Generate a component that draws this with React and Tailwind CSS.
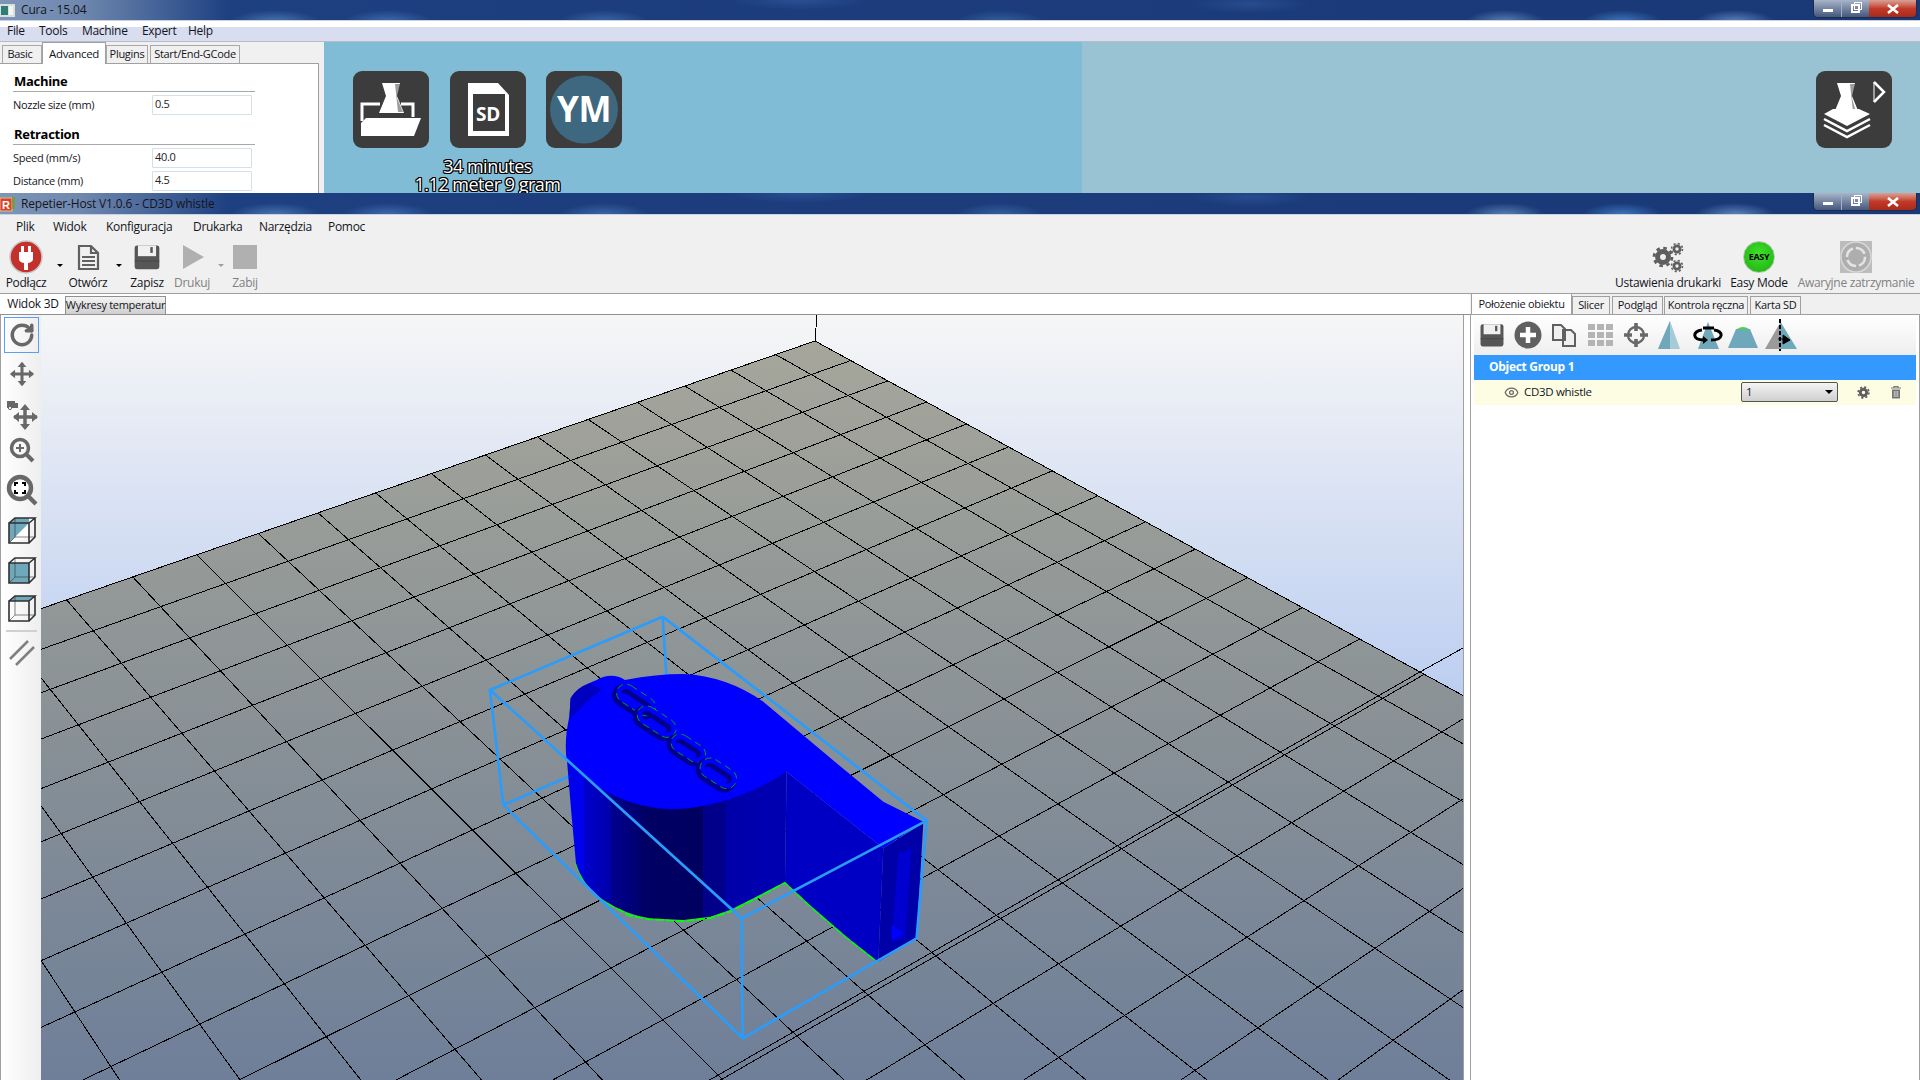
import { RotateCw, Eye } from "lucide-react";

const aero =
  "bg-[radial-gradient(ellipse_45px_12px_at_275px_22px,#4a76b0,transparent),radial-gradient(ellipse_45px_12px_at_388px_22px,#3f6cae,transparent),radial-gradient(ellipse_45px_12px_at_604px_22px,#3c68a8,transparent),radial-gradient(ellipse_70px_10px_at_800px_0px,#2a4f92,transparent),radial-gradient(ellipse_45px_12px_at_1000px_22px,#35609f,transparent),radial-gradient(ellipse_60px_10px_at_1250px_4px,#284c8e,transparent),radial-gradient(ellipse_40px_12px_at_1505px_22px,#5a83b5,transparent),radial-gradient(ellipse_40px_12px_at_1622px_22px,#3f78c0,transparent),radial-gradient(ellipse_40px_12px_at_1735px_22px,#5f86bf,transparent),linear-gradient(90deg,#7d95b8_0px,#7088ae_80px,#3d5d94_170px,#1e3f80_230px,#193876_100%)]";

function WindowControls() {
  return (
    <div className="ml-auto mr-[3px] flex h-[18px] self-start overflow-hidden rounded-b-[5px] border border-t-0 border-[#1c2c4c] text-white">
      <div className="flex w-[28px] items-center justify-center border-r border-[#a0b0c8] bg-gradient-to-b from-[#a8b4c8] to-[#46587c]">
        <div className="mt-[3px] h-[3px] w-[10px] bg-white" />
      </div>
      <div className="flex w-[27px] items-center justify-center bg-gradient-to-b from-[#a8b4c8] to-[#46587c]">
        <div className="relative h-[9px] w-[9px] border-2 border-white">
          <div className="absolute -right-[4px] -top-[4px] h-[8px] w-[8px] border border-white" />
        </div>
      </div>
      <div className="flex w-[47px] items-center justify-center bg-gradient-to-b from-[#d8a098] via-[#c23a28] to-[#a82a1c]">
        <svg width="12" height="10" viewBox="0 0 12 10">
          <path d="M1 1 L11 9 M11 1 L1 9" stroke="#fff" strokeWidth="2.6" />
        </svg>
      </div>
    </div>
  );
}

function TitleBar({ icon, title, height }) {
  return (
    <div className={`flex ${height} items-center border-b border-[#c8d2e4] ${aero}`}>
      <div className="flex w-[21px] justify-start">{icon}</div>
      <span className="text-[12px] tracking-[-0.15px] text-[#14141c]">{title}</span>
      <WindowControls />
    </div>
  );
}

function CuraIcon() {
  return (
    <svg width="15" height="13" viewBox="0 0 15 13">
      <rect x="0" y="0" width="15" height="13" fill="#d8e0d8" />
      <rect x="1" y="2" width="7" height="9" fill="#2e7d78" />
      <rect x="9" y="2" width="4" height="9" fill="#f4f4f4" />
    </svg>
  );
}

function RepIcon() {
  return (
    <svg width="16" height="16" viewBox="0 0 16 16">
      <rect x="0" y="2" width="12" height="13" fill="#d9442a" stroke="#e0c080" />
      <text x="2" y="13" fontSize="11" fontWeight="700" fill="#fff" fontFamily="Liberation Sans, sans-serif">R</text>
      <rect x="12" y="1" width="3" height="12" fill="#7a9a50" />
    </svg>
  );
}

function Flask({ x = 0, y = 0 }) {
  return (
    <path
      transform={`translate(${x} ${y})`}
      d="M0 0 H18 L15 13 L22 30 H-3 L4 13 Z"
      fill="#fff"
    />
  );
}

function LoadLogo() {
  return (
    <svg width="76" height="77" viewBox="0 0 76 77">
      <path d="M9 50 V33 H27 M48 33 H60 V46" fill="none" stroke="#fff" strokeWidth="3" />
      <Flask x={29} y={12} />
      <path d="M42 13 L47 13 L44 27 L50 41 L45 41 Z" fill="#3c3c3c" opacity="0.5" />
      <path d="M8 65 V52 L13 47 H68 L61 65 Z" fill="#fff" />
    </svg>
  );
}

function SdLogo() {
  return (
    <svg width="76" height="77" viewBox="0 0 76 77">
      <path d="M18 12 H48 L59 24 V65 H18 Z" fill="#fff" />
      <path d="M23 23 H55 V60 H23 Z" fill="#3c3c3c" />
      <text x="26" y="50" fontSize="19" fontWeight="700" fill="#fff" fontFamily="Open Sans, sans-serif">SD</text>
    </svg>
  );
}

function YmLogo() {
  return (
    <svg width="76" height="77" viewBox="0 0 76 77">
      <circle cx="38" cy="38.5" r="34" fill="#3d6880" />
      <text x="38" y="51" textAnchor="middle" fontSize="35" fontWeight="700" fill="#fff" fontFamily="Open Sans, sans-serif">YM</text>
    </svg>
  );
}

function LayerLogo() {
  return (
    <svg width="76" height="77" viewBox="0 0 76 77">
      <Flask x={21} y={12} />
      <path d="M34 13 L39 13 L36 27 L40 41 L37 41 Z" fill="#3c3c3c" opacity="0.5" />
      <path d="M8 43 L17 38 H43 L54 43 L31 55 Z" fill="#fff" />
      <path d="M8 48 L31 60 L54 48 M8 54 L31 66 L54 54" fill="none" stroke="#fff" strokeWidth="2.5" />
      <path d="M58 11 L68 21 L58 31" fill="none" stroke="#fff" strokeWidth="2.5" />
      <path d="M58 11 L58 31" fill="none" stroke="#fff" strokeWidth="1" />
    </svg>
  );
}

function LogoButton({ children }) {
  return <div className="h-[77px] w-[76px] rounded-[9px] bg-[#3c3c3c]">{children}</div>;
}

function CuraRow({ label, value }) {
  return (
    <div className="flex h-[20px] items-center">
      <span className="w-[139px] text-[11px] text-[#14141c]">{label}</span>
      <div className="flex h-[20px] w-[100px] items-center rounded-[1px] border border-[#d4e0e8] bg-white pb-[2px] pl-[2px] text-[11px] text-[#222]">
        {value}
      </div>
    </div>
  );
}

function CuraWindow() {
  return (
    <div className="h-[193px] overflow-hidden bg-[#f0f0f0]">
      <TitleBar icon={<CuraIcon />} title="Cura - 15.04" height="h-[21px]" />
      <div className="flex h-[21px] items-center border-b border-[#b8bcc8] bg-gradient-to-b from-white from-30% to-[#d8def0] to-30% pl-[7px] text-[12px] text-[#14141c]">
        <span className="w-[32px]">File</span>
        <span className="w-[43px]">Tools</span>
        <span className="w-[60px]">Machine</span>
        <span className="w-[46px]">Expert</span>
        <span>Help</span>
      </div>
      <div className="flex h-[151px]">
        <div className="w-[324px]">
          <div className="flex h-[21px] items-start text-[11px] text-[#14141c]">
            <div className="ml-[2px] mt-[3px] flex h-[18px] w-[40px] items-center justify-center border border-b-0 border-[#a8a8a8] bg-[#f0f0f0] pr-[4px]">Basic</div>
            <div className="relative z-10 flex h-[22px] w-[64px] items-center justify-center border border-b-0 border-[#a0a0a0] bg-white text-[11.5px]">Advanced</div>
            <div className="mt-[3px] flex h-[18px] w-[42px] items-center justify-center border border-b-0 border-[#a8a8a8] bg-[#f0f0f0]">Plugins</div>
            <div className="ml-[2px] mt-[3px] flex h-[18px] w-[90px] items-center justify-center border border-b-0 border-[#a8a8a8] bg-[#f0f0f0]">Start/End-GCode</div>
          </div>
          <div className="h-[130px] w-[319px] border-r border-t border-[#a0a0a0] bg-white pl-[13px] pt-[9px]">
            <div className="h-[19px] w-[242px] border-b border-[#a8a8a8] pl-[1px] text-[13px] leading-[17px] font-bold text-black">Machine</div>
            <div className="mt-[3px]">
              <CuraRow label="Nozzle size (mm)" value="0.5" />
            </div>
            <div className="mt-[11px] h-[19px] w-[242px] border-b border-[#a8a8a8] pl-[1px] text-[13px] leading-[17px] font-bold text-black">Retraction</div>
            <div className="mt-[3px]">
              <CuraRow label="Speed (mm/s)" value="40.0" />
            </div>
            <div className="mt-[3px]">
              <CuraRow label="Distance (mm)" value="4.5" />
            </div>
          </div>
        </div>
        <div className="w-[758px] bg-[#80bcd6] pl-[29px] pt-[29px]">
          <div className="flex w-[269px] justify-between">
            <LogoButton><LoadLogo /></LogoButton>
            <LogoButton><SdLogo /></LogoButton>
            <LogoButton><YmLogo /></LogoButton>
          </div>
          <div className="mt-[9px] w-[269px] text-center text-[18px] leading-[18px] tracking-[-0.5px] text-white [text-shadow:1px_0_0_#000,-1px_0_0_#000,0_1px_0_#000,0_-1px_0_#000,1px_1px_0_#000,-1px_-1px_0_#000,1px_-1px_0_#000,-1px_1px_0_#000]">
            <div>34 minutes</div>
            <div>1.12 meter 9 gram</div>
          </div>
        </div>
        <div className="flex flex-1 justify-end bg-[#99c2d3] pr-[28px] pt-[29px]">
          <LogoButton><LayerLogo /></LogoButton>
        </div>
      </div>
    </div>
  );
}

function PlugIcon() {
  return (
    <svg width="34" height="34" viewBox="0 0 34 34">
      <circle cx="17" cy="17" r="16" fill="#c4312c" stroke="#c8c8c8" strokeWidth="1.5" />
      <path d="M12 6 H15 V12 H19 V6 H22 V12 H24 V19 Q24 22 19 23 V30 H15 V23 Q10 22 10 19 V12 H12 Z" fill="#fff" />
    </svg>
  );
}

function FileIcon() {
  return (
    <svg width="34" height="34" viewBox="0 0 34 34">
      <path d="M8 6 H20 L27 13 V29 H8 Z M20 6 V13 H27" fill="none" stroke="#606060" strokeWidth="2.2" />
      <path d="M11 17 H24 M11 21 H24 M11 25 H24" stroke="#606060" strokeWidth="1.8" />
    </svg>
  );
}

function DiskIcon({ size = 26 }) {
  return (
    <svg width={size} height={size} viewBox="0 0 34 34">
      <path d="M5 3 H29 Q32 3 32 6 V28 Q32 32 29 32 H5 Q2 32 2 28 V6 Q2 3 5 3 Z" fill="#565656" />
      <rect x="6" y="3" width="22" height="13" fill="#f0f0f0" />
      <rect x="21" y="5" width="3" height="7" fill="#565656" />
      <path d="M2 22 H32" stroke="#444" />
    </svg>
  );
}

function PlayIcon() {
  return (
    <svg width="34" height="34" viewBox="0 0 34 34">
      <path d="M8 5 L29 17 L8 29 Z" fill="#b0b0b0" />
    </svg>
  );
}

function StopIcon() {
  return (
    <svg width="34" height="34" viewBox="0 0 34 34">
      <rect x="5" y="5" width="24" height="24" fill="#b0b0b0" />
    </svg>
  );
}

function Caret({ gray }) {
  return (
    <div className={`mt-[26px] h-0 w-0 border-x-[3.5px] border-t-[3.5px] border-x-transparent ${gray ? "border-t-[#a0a0a0]" : "border-t-black"}`} />
  );
}

function ToolItem({ width, label, gray, children }) {
  return (
    <div className={`flex ${width} flex-col items-center`}>
      <div className="flex h-[38px] items-center justify-center">{children}</div>
      <span className={`-mt-[2px] whitespace-nowrap text-[12px] leading-[17px] ${gray ? "text-[#808080]" : "text-[#14141c]"}`}>{label}</span>
    </div>
  );
}

function Gear({ cx, cy, r }) {
  const c = 2 * Math.PI * (r + 1);
  return (
    <g fill="none" stroke="#5e5e5e">
      <circle cx={cx} cy={cy} r={r * 0.68} strokeWidth={r * 0.62} />
      <circle cx={cx} cy={cy} r={r + 1} strokeWidth={r * 0.34} strokeDasharray={`${c / 16} ${c / 16}`} />
    </g>
  );
}

function GearsIcon() {
  return (
    <svg width="34" height="34" viewBox="0 0 34 34">
      <Gear cx={12} cy={17} r={8} />
      <Gear cx={26} cy={9} r={4.5} />
      <Gear cx={26} cy={26} r={4.5} />
    </svg>
  );
}

function EasyIcon() {
  return (
    <div className="flex h-[32px] w-[32px] items-center justify-center rounded-full border border-[#b8c8b8] bg-[radial-gradient(circle_at_50%_40%,#3fe02a,#1cae10)] text-[9px] font-bold text-black">
      EASY
    </div>
  );
}

function StopAllIcon() {
  return (
    <svg width="34" height="34" viewBox="0 0 34 34">
      <rect x="1" y="1" width="32" height="32" fill="#bcbcbc" />
      <circle cx="17" cy="17" r="15" fill="#aeaeae" stroke="#d8d8d8" strokeWidth="1.5" />
      <circle cx="17" cy="17" r="9" fill="none" stroke="#e4e4e4" strokeWidth="2.5" strokeDasharray="11 3" />
    </svg>
  );
}

function Cross({ size = 30 }) {
  return (
    <svg width={size} height={size} viewBox="0 0 30 30">
      <path d="M15 3 V27 M3 15 H27" stroke="#686868" strokeWidth="3.5" />
      <path d="M15 1 L20 7 H10 Z M15 29 L20 23 H10 Z M1 15 L7 10 V20 Z M29 15 L23 10 V20 Z" fill="#686868" />
    </svg>
  );
}

function TruckMove() {
  return (
    <svg width="32" height="32" viewBox="0 0 32 32">
      <path d="M19 8 V30 M8 19 H31" stroke="#686868" strokeWidth="3.5" />
      <path d="M19 6 L24 12 H14 Z M19 32 L24 26 H14 Z M7 19 L13 14 V24 Z M32 19 L26 14 V24 Z" fill="#686868" />
      <path d="M1 3 H9 V10 H1 Z M9 5 H12 V10 H9 Z" fill="#686868" />
      <circle cx="4" cy="10" r="1.6" fill="#fff" stroke="#686868" />
    </svg>
  );
}

function ZoomIcon() {
  return (
    <svg width="26" height="26" viewBox="0 0 26 26">
      <circle cx="11" cy="11" r="8.5" fill="none" stroke="#686868" strokeWidth="3.5" />
      <path d="M17 17 L24 24" stroke="#686868" strokeWidth="4" />
      <path d="M7 11 H15 M11 7 V15" stroke="#686868" strokeWidth="2" />
    </svg>
  );
}

function ZoomFitIcon() {
  return (
    <svg width="32" height="32" viewBox="0 0 32 32">
      <circle cx="14" cy="14" r="11" fill="#fff" stroke="#686868" strokeWidth="4.5" />
      <path d="M22 22 L30 30" stroke="#686868" strokeWidth="4.5" />
      <path d="M9 12 V9 H12 M16 9 H19 V12 M19 16 V19 H16 M12 19 H9 V16" fill="none" stroke="#000" strokeWidth="2" />
    </svg>
  );
}

function CubeIcon({ face }) {
  return (
    <svg width="30" height="30" viewBox="0 0 30 30">
      {face === "iso" && <path d="M8 3 H28 L22 8 V22 L2 28 V8 Z" fill="#fff" />}
      {face === "iso" && <path d="M2 8 L8 3 H22 V8 Z M2 8 H22 L2 28 Z" fill="#6fa8bb" />}
      {face === "front" && <rect x="2" y="8" width="20" height="20" fill="#6fa8bb" />}
      {face === "top" && <path d="M2 8 L8 3 H28 L22 8 Z" fill="#6fa8bb" />}
      <path d="M2 8 H22 V28 H2 Z M2 8 L8 3 H28 L22 8 M28 3 V22 L22 28" fill="none" stroke="#303030" strokeWidth="1.6" />
      <path d="M8 3 V22 H28 M8 22 L2 28" fill="none" stroke="#303030" strokeWidth="0.6" />
    </svg>
  );
}

function ParallelIcon() {
  return (
    <svg width="28" height="28" viewBox="0 0 28 28">
      <path d="M2 20 L20 2 M8 26 L26 8" stroke="#808080" strokeWidth="2.5" />
    </svg>
  );
}

const sideTools = [
  { slot: "h-[38px] pt-[2px]", selected: true, icon: <RotateCw size={26} strokeWidth={3.2} color="#686868" /> },
  { slot: "h-[42px]", icon: <Cross size={26} /> },
  { slot: "h-[38px]", icon: <TruckMove /> },
  { slot: "h-[34px]", icon: <ZoomIcon /> },
  { slot: "h-[46px]", icon: <ZoomFitIcon /> },
  { slot: "h-[34px]", icon: <CubeIcon face="iso" /> },
  { slot: "h-[46px]", icon: <CubeIcon face="front" /> },
  { slot: "h-[30px]", icon: <CubeIcon face="top" /> },
];

function SideToolbar() {
  return (
    <div className="flex h-full w-[41px] flex-col items-center border-l border-[#a0a0a0] bg-gradient-to-r from-white to-[#eeeeee] pl-[1px]">
      {sideTools.map((t, i) => (
        <div key={i} className={`flex w-full items-center justify-center ${t.slot}`}>
          {t.selected ? (
            <div className="flex h-[36px] w-[35px] items-center justify-center border border-[#5a9ff0]">{t.icon}</div>
          ) : (
            t.icon
          )}
        </div>
      ))}
      <div className="my-[7px] h-[2px] w-[31px] bg-[#d0d0d0]" />
      <div className="flex h-[28px] items-center justify-center">
        <ParallelIcon />
      </div>
    </div>
  );
}

// perspective of the printer bed, fitted to the grid crossings
const P = (u, v) => {
  const d = 1 - 0.01449 * u - 0.019 * v;
  return [815 + (-43 * u + 35.04 * v) / d, 341 + (14.87 * u + 19.17 * v) / d];
};
const UMAX = 18.9;
const VMAX = 20;
const ticks = Array.from({ length: 19 }, (_, i) => i + 1);
const bedCorners = [P(0, 0), P(UMAX, 0), P(UMAX, VMAX), P(0, VMAX)].map((p) => p.join(",")).join(" ");

function Seg({ a, b, ...rest }) {
  return <line x1={a[0]} y1={a[1]} x2={b[0]} y2={b[1]} {...rest} />;
}

function Letter({ x, y, w, h, rot, rx = 24 }) {
  return (
    <g transform={`rotate(${rot} ${x} ${y})`}>
      <rect x={x - w / 2 - 3} y={y - h / 2 + 9} width={w} height={h} rx={rx} fill="none" stroke="#00008c" strokeWidth="26" />
      <rect x={x - w / 2} y={y - h / 2} width={w} height={h} rx={rx} fill="none" stroke="#0000ff" strokeWidth="14" />
      <rect x={x - w / 2 - 7} y={y - h / 2 - 7} width={w + 14} height={h + 14} rx={rx + 6} fill="none" stroke="#00b000" strokeWidth="2.4" strokeDasharray="20 14" />
    </g>
  );
}

function Whistle() {
  const blue = "#2a9cfb";
  return (
    <g transform="translate(470 600) scale(0.3333)">
      {/* hidden part of the selection box */}
      <path d="M578 50 L590 240 M100 615 L300 528" stroke={blue} strokeWidth="8" fill="none" />
      <path
        d="M318 790 L345 852 L400 902 L480 947 L540 957 L640 963 L720 954 L780 934 L850 899 L945 847 L1020 917 L1130 1012 L1225 1087"
        fill="none"
        stroke="#00ff00"
        strokeWidth="7"
        strokeDasharray="26 5"
      />
      <path
        d="M290 470 L305 650 L318 790 Q340 860 400 900 Q470 945 540 955 L640 960 L720 950 L780 930 L850 895 L945 845 L950 515 Z"
        fill="url(#whistleSide)"
      />
      <path d="M950 515 L1240 745 L1225 1085 L1130 1010 L1020 915 L945 845 Z" fill="#0000c4" />
      <path d="M1240 745 L1360 668 L1340 1015 L1225 1085 Z" fill="#0000a8" />
      <path d="M1285 760 L1325 745 L1305 1018 L1265 1025 Z" fill="#0000d0" />
      <path d="M1265 975 L1302 1000 L1265 1022 Z" fill="#0000ff" />
      <path
        d="M290 480 Q282 420 298 350 L302 295 Q320 262 380 240 Q425 215 465 240 Q560 222 640 222 Q770 228 880 305 L1100 490 L1240 605 L1360 665 L1240 745 L950 515 Q780 625 600 628 Q420 620 290 480 Z"
        fill="#0000ff"
      />
      <path d="M302 295 Q320 262 360 250 L395 270 Q340 310 298 360 Z" fill="#0000c0" />
      <Letter x={498} y={300} w={115} h={42} rot={33} />
      <Letter x={560} y={365} w={115} h={42} rot={33} />
      <Letter x={655} y={445} w={100} h={40} rot={33} />
      <Letter x={745} y={520} w={105} h={46} rot={33} />
      {/* selection box */}
      <path
        d="M578 50 L60 270 L815 955 L1370 662 L578 50 M60 270 L100 615 L818 1315 L1340 1015 L1370 662 M815 955 L818 1315"
        fill="none"
        stroke={blue}
        strokeWidth="8"
      />
    </g>
  );
}

function Scene() {
  return (
    <svg width="1422" height="765" viewBox="41 315 1422 765" className="block">
      <defs>
        <linearGradient id="sky" x1="0" y1="315" x2="0" y2="720" gradientUnits="userSpaceOnUse">
          <stop offset="0" stopColor="#f6f6f6" />
          <stop offset="1" stopColor="#b8cbf0" />
        </linearGradient>
        <linearGradient id="bed" x1="0" y1="341" x2="0" y2="1080" gradientUnits="userSpaceOnUse">
          <stop offset="0" stopColor="#a6a69b" />
          <stop offset="0.5" stopColor="#8a9296" />
          <stop offset="1" stopColor="#6f7f99" />
        </linearGradient>
        <linearGradient id="whistleSide" x1="290" y1="0" x2="950" y2="0" gradientUnits="userSpaceOnUse">
          <stop offset="0" stopColor="#0000ee" />
          <stop offset="0.08" stopColor="#0000ee" />
          <stop offset="0.08" stopColor="#0000cc" />
          <stop offset="0.2" stopColor="#0000aa" />
          <stop offset="0.2" stopColor="#000090" />
          <stop offset="0.3" stopColor="#000078" />
          <stop offset="0.36" stopColor="#000064" />
          <stop offset="0.62" stopColor="#000060" />
          <stop offset="0.62" stopColor="#00008a" />
          <stop offset="0.72" stopColor="#00008a" />
          <stop offset="0.72" stopColor="#0000a8" />
          <stop offset="1" stopColor="#0000b4" />
        </linearGradient>
      </defs>
      <rect x="41" y="315" width="1422" height="765" fill="url(#sky)" />
      <polygon points={bedCorners} fill="url(#bed)" />
      <g stroke="#000" strokeWidth="1" shapeRendering="crispEdges">
        <line x1="816.5" y1="315" x2="815.5" y2="341" />
        <Seg a={P(0, 0)} b={P(UMAX, 0)} />
        <Seg a={P(0, 0)} b={P(0, VMAX)} />
        {ticks.map((k) => (
          <Seg key={`u${k}`} a={P(k - 0.1, 0)} b={P(k - 0.1, VMAX)} />
        ))}
        {ticks.map((k) => (
          <Seg key={`v${k}`} a={P(0, k)} b={P(UMAX, k)} />
        ))}
        <Seg a={P(0, 13.07)} b={P(UMAX, 13.07)} />
        <line x1="1420" y1="672" x2="1463" y2="648" />
      </g>
      <Whistle />
    </svg>
  );
}

function TrayTriangle() {
  return (
    <svg width="24" height="32" viewBox="0 0 24 32">
      <path d="M13 2 L23 30 H1 Z" fill="#a6cbd8" />
      <path d="M13 2 L13 30 H1 Z" fill="#6fa8bb" />
    </svg>
  );
}

function RotateTri() {
  return (
    <svg width="32" height="32" viewBox="0 0 32 32">
      <path d="M16 3 L27 30 H6 Z" fill="#6fa8bb" />
      <path d="M10 11 C0 12 0 21 12 21 M22 11 C32 12 32 21 19 21" fill="none" stroke="#000" strokeWidth="3" />
      <path d="M11 9 L22 9" stroke="#000" strokeWidth="3" />
      <path d="M11 17 L16 21 L11 25 Z" fill="#000" />
    </svg>
  );
}

function ScaleTri() {
  return (
    <svg width="32" height="32" viewBox="0 0 32 32">
      <path d="M9 10 H23 L31 29 H1 Z" fill="#6fa8bb" />
      <path d="M10 10 Q16 6 22 10 Z" fill="#3fe02a" />
    </svg>
  );
}

function MirrorTri() {
  return (
    <svg width="34" height="32" viewBox="0 0 34 32">
      <path d="M16 4 L16 30 H1 Z" fill="#9a9a9a" />
      <path d="M16 2 L33 30 H16 Z" fill="#6fa8bb" />
      <path d="M16 0 V32" stroke="#000" strokeWidth="2" strokeDasharray="4 2" />
      <path d="M14 20 H20 M19 16 L26 21 L19 25 Z" fill="#000" stroke="#000" />
    </svg>
  );
}

function CopyIcon() {
  return (
    <svg width="26" height="26" viewBox="0 0 26 26">
      <path d="M2 3 H10 L14 7 V18 H2 Z M12 8 H20 L24 12 V24 H12 Z" fill="#f0f0f0" stroke="#606060" strokeWidth="2" />
    </svg>
  );
}

function GridIcon() {
  return (
    <div className="grid grid-cols-3 gap-[2px]">
      {[1, 2, 3, 4, 5, 6, 7, 8, 9].map((n) => (
        <div key={n} className="h-[6px] w-[7px] bg-[#b4b4b4]" />
      ))}
    </div>
  );
}

function TargetIcon() {
  return (
    <svg width="26" height="26" viewBox="0 0 26 26">
      <circle cx="13" cy="13" r="8" fill="none" stroke="#686868" strokeWidth="2.4" />
      <path d="M13 1 V9 M13 17 V25 M1 13 H9 M17 13 H25" stroke="#686868" strokeWidth="3.6" />
    </svg>
  );
}

function PlusCircle() {
  return (
    <svg width="28" height="28" viewBox="0 0 28 28">
      <circle cx="14" cy="14" r="13.5" fill="#606060" />
      <path d="M14 6 V22 M6 14 H22" stroke="#fff" strokeWidth="4.5" />
    </svg>
  );
}

function SmallGear() {
  return (
    <svg width="13" height="13" viewBox="0 0 18 18">
      <Gear cx={9} cy={9} r={6.5} />
    </svg>
  );
}

function TrashIcon() {
  return (
    <svg width="12" height="13" viewBox="0 0 12 13">
      <path d="M1 2 H11 M4 2 V0.5 H8 V2" fill="none" stroke="#777" strokeWidth="1.2" />
      <path d="M2 3.5 H10 V12.5 H2 Z" fill="#777" />
      <path d="M4.3 5 V11 M6 5 V11 M7.7 5 V11" stroke="#ddd" strokeWidth="0.8" />
    </svg>
  );
}

const rightTabs = [
  { label: "Slicer", cls: "w-[38px]" },
  { label: "Podgląd", cls: "ml-[2px] w-[51px]" },
  { label: "Kontrola ręczna", cls: "ml-[1px] w-[84px]" },
  { label: "Karta SD", cls: "ml-[2px] w-[51px]" },
];

const rightTools = [
  { cls: "w-[36px]", icon: <DiskIcon /> },
  { cls: "w-[36px]", icon: <PlusCircle /> },
  { cls: "w-[36px]", icon: <CopyIcon /> },
  { cls: "w-[36px]", icon: <GridIcon /> },
  { cls: "w-[36px]", icon: <TargetIcon /> },
  { cls: "w-[30px]", icon: <TrayTriangle /> },
  { cls: "w-[48px]", icon: <RotateTri /> },
  { cls: "w-[22px]", icon: <ScaleTri /> },
  { cls: "w-[54px]", icon: <MirrorTri /> },
];

function RightPanel() {
  return (
    <div className="flex h-full w-[450px] flex-col">
      <div className="flex h-[21px] items-end border-b border-[#a0a0a0] pl-[1px] text-[11px] text-[#14141c]">
        <div className="relative z-10 flex h-[21px] w-[101px] items-center justify-center border border-b-0 border-[#a0a0a0] bg-white">Położenie obiektu</div>
        {rightTabs.map((t) => (
          <div key={t.label} className={`flex h-[18px] ${t.cls} items-center justify-center border border-b-0 border-[#a0a0a0] bg-[#f0f0f0]`}>{t.label}</div>
        ))}
      </div>
      <div className="flex-1 border-x border-[#a0a0a0] bg-white pl-[3px] pr-[3px]">
        <div className="flex h-[40px] items-center bg-gradient-to-b from-white to-[#eeeeee]">
          {rightTools.map((t, i) => (
            <div key={i} className={`flex ${t.cls} items-center justify-center [&>*]:shrink-0`}>{t.icon}</div>
          ))}
        </div>
        <div className="flex h-[25px] items-center bg-[#3399ff] pb-[1px] pl-[15px] text-[12px] font-bold text-white">Object Group 1</div>
        <div className="flex h-[25px] items-center bg-[#fdfde4] pb-[1px] text-[11.5px] text-[#14141c]">
          <div className="ml-[30px] w-[20px]">
            <Eye size={15} color="#666" strokeWidth={2} />
          </div>
          <span className="w-[217px]">CD3D whistle</span>
          <div className="flex h-[20px] w-[97px] items-center justify-between rounded-[2px] border border-[#555] bg-gradient-to-b from-[#f4f4f4] to-[#cfcfcf] px-[4px]">
            <span>1</span>
            <div className="h-0 w-0 border-x-[4px] border-t-[4px] border-x-transparent border-t-black" />
          </div>
          <div className="ml-[19px] w-[33px]"><SmallGear /></div>
          <TrashIcon />
        </div>
      </div>
    </div>
  );
}

function RepetierWindow() {
  return (
    <div className="flex h-[887px] flex-col bg-[#f0f0f0]">
      <TitleBar icon={<RepIcon />} title="Repetier-Host V1.0.6 - CD3D whistle" height="h-[22px]" />
      <div className="flex h-[23px] items-center pl-[16px] text-[12px] text-[#14141c]">
        <span className="w-[37px]">Plik</span>
        <span className="w-[53px]">Widok</span>
        <span className="w-[87px]">Konfiguracja</span>
        <span className="w-[66px]">Drukarka</span>
        <span className="w-[69px]">Narzędzia</span>
        <span>Pomoc</span>
      </div>
      <div className="flex h-[56px] border-b border-[#a0a0a0]">
        <ToolItem width="w-[52px]" label="Podłącz"><PlugIcon /></ToolItem>
        <div className="flex w-[16px] justify-center"><Caret /></div>
        <ToolItem width="w-[40px]" label="Otwórz"><FileIcon /></ToolItem>
        <div className="flex w-[22px] justify-center"><Caret /></div>
        <ToolItem width="w-[34px]" label="Zapisz"><DiskIcon size={28} /></ToolItem>
        <div className="w-[4px]" />
        <ToolItem width="w-[48px]" label="Drukuj" gray><PlayIcon /></ToolItem>
        <div className="flex w-[10px] justify-center"><Caret gray /></div>
        <ToolItem width="w-[38px]" label="Zabij" gray><StopIcon /></ToolItem>
        <div className="ml-auto flex pr-[5px]">
          <ToolItem width="w-[106px]" label="Ustawienia drukarki"><GearsIcon /></ToolItem>
          <ToolItem width="w-[76px]" label="Easy Mode"><EasyIcon /></ToolItem>
          <ToolItem width="w-[118px]" label="Awaryjne zatrzymanie" gray><StopAllIcon /></ToolItem>
        </div>
      </div>
      <div className="flex flex-1 overflow-hidden">
        <div className="flex w-[1470px] flex-col bg-white">
          <div className="flex h-[21px] items-end border-b border-[#909090] pl-[2px] text-[11px] text-[#14141c]">
            <div className="flex h-[21px] w-[62px] items-center justify-center bg-white text-[12px]">Widok 3D</div>
            <div className="ml-[1px] flex h-[18px] w-[101px] items-center justify-center whitespace-nowrap border border-b-0 border-[#909090] bg-gradient-to-b from-[#f4f4f4] to-[#cfcfcf]">Wykresy temperatur</div>
          </div>
          <div className="flex flex-1">
            <SideToolbar />
            <Scene />
            <div className="flex-1 border-l border-[#a0a0a0] bg-white" />
          </div>
        </div>
        <RightPanel />
      </div>
    </div>
  );
}

export default function App() {
  return (
    <div className="h-[1080px] w-[1920px] overflow-hidden bg-white font-['Open_Sans','Noto_Sans',sans-serif] tracking-[-0.3px]">
      <CuraWindow />
      <RepetierWindow />
    </div>
  );
}
